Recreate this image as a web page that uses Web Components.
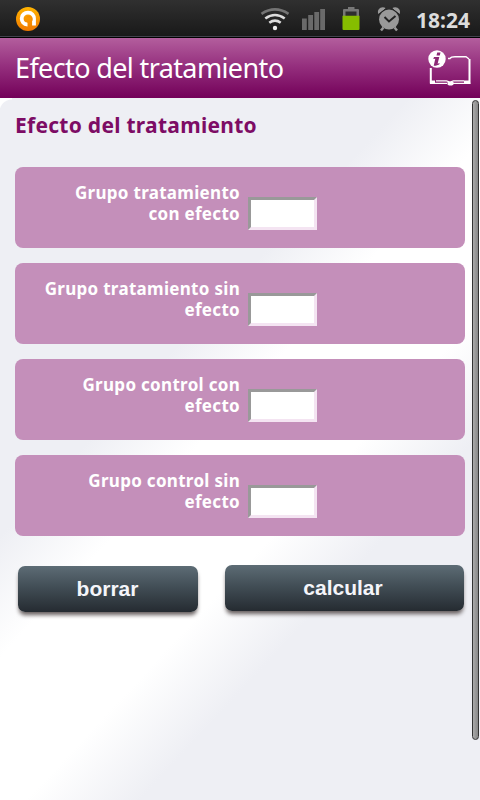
<!DOCTYPE html>
<html lang="es">
<head>
<meta charset="utf-8">
<title>Efecto del tratamiento</title>
<style>
html,body{margin:0;height:100%;overflow:hidden}
body{font-family:"Noto Sans","Open Sans",sans-serif}
</style>
</head>
<body>
<calc-app></calc-app>
<script>
const define=(name,html)=>customElements.define(name,class extends HTMLElement{
  constructor(){super();this.attachShadow({mode:'open'}).innerHTML=html;}
});

define('status-bar',`<style>
:host{display:flex;box-sizing:border-box;height:38px;align-items:flex-start;background:linear-gradient(#303030,#191919 36px,#42424c 36px,#42424c 37px,#000 37px);color:#dcdcdc}
svg{display:block;flex:none}
.sp{flex:1}
.time{width:64px;font:700 21px/40px "Noto Sans",sans-serif;white-space:nowrap}
</style>
<svg width="60" height="36" viewBox="0 0 60 36"><defs><linearGradient id="o" x2="0" y2="1"><stop stop-color="#ffb400"/><stop offset="1" stop-color="#f07800"/></linearGradient></defs><circle cx="28" cy="19" r="12" fill="url(#o)"/><path d="M27.500 24.500C23.500 24.500 21.700 21.500 21.700 18.500C21.700 15 24.500 12.700 28 12.700C32 12.700 34 15.500 34 18.500V25.500" fill="none" stroke="#fff" stroke-width="3.800"/><path d="M27 16.800h2.500a2.500 2.500 0 0 1 0 5H27" fill="none" stroke="#f78f00" stroke-width="1.500"/></svg>
<div class="sp"></div>
<svg width="160" height="36" viewBox="256 0 160 36">
<g fill="none" stroke-width="2.600"><path d="M261.500 13.800Q275 5 288.500 13.800" stroke="#747474"/><path d="M265.300 18.500Q275 11.500 284.700 18.500" stroke="#ddd"/><path d="M269.300 22.800Q275 18.600 280.700 22.800" stroke="#ddd"/></g><circle cx="275" cy="28" r="2.200" fill="#eee"/>
<path d="M302 18.500h4.800v11.500h-4.800zM308.200 15h4.800v15h-4.800zM314.300 12h4.800v18h-4.800zM320.200 9h4.800v21h-4.800z" fill="#6a6a6a"/>
<path d="M348 7h6.500v2H358q1 0 1 1v6h-16v-6q0-1 1-1h4z" fill="#777"/><path d="M345.500 11.500h11v5h-11z" fill="#2e2e2e"/><path d="M342.500 15.800h17v13.200q0 1-1 1h-15q-1 0-1-1z" fill="#86bd00"/>
<g fill="#999"><circle cx="389" cy="19.500" r="10"/><path d="M378.300 14C376.500 9 381.500 5.500 386 8.200zM399.700 14C401.500 9 396.500 5.500 392 8.200z"/></g><path d="M377.500 15.500l9-7.500M400.500 15.500l-9-7.500" stroke="#252525" stroke-width="1"/><path d="M383.500 27.500l-2.500 3M394.500 27.500l2.500 3" stroke="#999" stroke-width="2.500"/><path d="M384.500 17l4.500 4.500 6.500-5.500" fill="none" stroke="#222" stroke-width="2"/>
</svg>
<div class="time">18:24</div>`);

define('title-bar',`<style>
:host{display:flex;box-sizing:border-box;height:60px;padding:0 9px 0 15px;align-items:center;justify-content:space-between;background:linear-gradient(#b35e9d,#96317f 45%,#730059);color:#fff}
.t{font-size:27px;line-height:60px;letter-spacing:-.62px;white-space:nowrap}
svg{display:block}
</style><div class="t"><slot></slot></div>
<svg width="44" height="38" viewBox="427 47 44 38"><path d="M469 57l-3-2.200H455q-4 0-5 1.700h-2" fill="none" stroke="#fff" stroke-width="1.400"/><path d="M430.800 66v15.500M469.500 57v24.500" stroke="#fff" stroke-width="2"/><path d="M430 81.300h17M453 81.300h17.500M436 78.800h10.500l3.500 1.200 3.500-1.200H464" fill="none" stroke="#fff" stroke-width="1.300"/><path d="M430 78.500h5v3h-5zM464 78.500h6v3h-6zM447.500 80h6v2.500l-1.500 1h-3l-1.500-1z" fill="#fff"/><circle cx="437" cy="57" r="8.700" fill="#fff"/><path d="M437.200 50.500h3.300l-.7 3h-3.300zM434 55h5.300l-1.700 6.800 2-.8-.4 1.500-3.500 1.300h-2l1.600-7-2 .2z" fill="#8c2875"/></svg>`);

define('field-card',`<style>
:host{display:flex;box-sizing:border-box;height:81px;border-radius:8px;background:#c48fba;padding-top:15px;align-items:flex-start}
.l{width:225px;color:#fff;font-weight:700;font-size:17px;line-height:21px;letter-spacing:.3px;text-align:right;white-space:pre}
input{box-sizing:border-box;width:69px;height:33px;margin:15px 0 0 8px;padding:0;background:#fff;border:3px solid;border-color:#999 #f4e4f2 #f4e4f2 #999;border-radius:0;outline:0}
</style><div class="l"><slot></slot></div><input type="text">`);

define('push-button',`<style>
:host{display:block;box-sizing:border-box;height:46px;padding-right:var(--shift,3px);border-radius:7px;background:linear-gradient(#5d6c75,#424e56 45%,#252b31);box-shadow:0 4px 4px -1px #655d5d;text-align:center;color:#f4f5fa;font:700 21px/46px "Liberation Sans",Arial,sans-serif}
</style><slot></slot>`);

define('calc-app',`<style>
:host{display:flex;flex-direction:column;height:800px;width:480px}
main{position:relative;flex:1;display:flex;flex-direction:column;padding:0 15px;background:linear-gradient(133deg,#eeeff4 0,#eeeff4 36%,#fff 46%,#fff 60%,#eeeff4 70%)}
main::before{content:"";position:absolute;left:0;top:0;width:12px;height:14px;background:radial-gradient(circle at 100% 100%,transparent 12px,#fff 13px)}
h1{margin:15px 0 0;height:54px;font-size:21px;line-height:25px;letter-spacing:.27px;color:#7d0c65;white-space:nowrap}
.cards{display:flex;flex-direction:column;gap:15px}
.btns{display:flex;margin:29px 1px 0 3px;gap:27px}
.a{width:180px;margin-top:1px;--shift:1px}.b{flex:1}
.bar{position:absolute;left:472px;top:2px;width:7px;height:640px;box-sizing:border-box;border:1px solid #333;border-radius:4px;background:linear-gradient(90deg,#aaa,#888)}
</style><status-bar></status-bar><title-bar>Efecto del tratamiento</title-bar>
<main><h1>Efecto del tratamiento</h1><div class="cards"><field-card>Grupo tratamiento
con efecto</field-card><field-card>Grupo tratamiento sin
efecto</field-card><field-card>Grupo control con
efecto</field-card><field-card>Grupo control sin
efecto</field-card></div>
<div class="btns"><push-button class="a">borrar</push-button><push-button class="b">calcular</push-button></div><div class="bar"></div></main>`);
</script>
</body>
</html>
